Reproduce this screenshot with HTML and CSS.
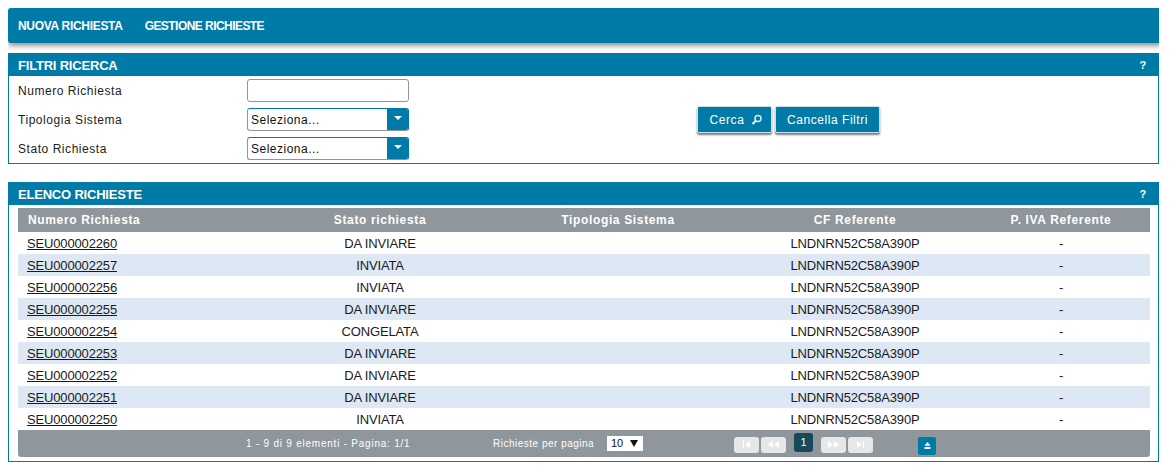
FILE: index.html
```html
<!DOCTYPE html>
<html>
<head>
    <meta charset="utf-8">
    <title>Elenco Richieste</title>
    <link rel="stylesheet" href="styles.css">
</head>
<body>
<div class="topbar">
    <a href="#" class="topbar-link">NUOVA RICHIESTA</a>
    <a href="#" class="topbar-link topbar-link-tight">GESTIONE RICHIESTE</a>
</div>

<div class="panel panel-filters">
    <div class="panel-title"><span>FILTRI RICERCA</span><span class="help">?</span></div>
    <div class="filters">
        <div class="filter-grid">
            <label class="filter-label">Numero Richiesta</label>
            <input type="text" class="field">
            <label class="filter-label">Tipologia Sistema</label>
            <div class="field combo"><span class="combo-text">Seleziona...</span><span class="combo-btn"><i class="combo-arrow"></i></span></div>
            <label class="filter-label">Stato Richiesta</label>
            <div class="field combo"><span class="combo-text">Seleziona...</span><span class="combo-btn"><i class="combo-arrow"></i></span></div>
        </div>
        <div class="filter-actions">
            <button class="btn btn-search">Cerca
                <svg width="12" height="12" viewBox="0 0 12 12"><circle cx="7" cy="4.6" r="3" fill="none" stroke="#d8eaf2" stroke-width="1.5"/><path d="M4.8 6.8L1.6 10" stroke="#fff" stroke-width="2"/></svg>
            </button>
            <button class="btn btn-clear">Cancella Filtri</button>
        </div>
    </div>
</div>

<div class="panel panel-list">
    <div class="panel-title"><span>ELENCO RICHIESTE</span><span class="help">?</span></div>
    <div class="list-body">
        <table class="grid">
            <colgroup>
                <col class="col-num"><col class="col-stato"><col class="col-tipo"><col class="col-cf"><col class="col-iva">
            </colgroup>
            <thead>
                <tr><th class="first">Numero Richiesta</th><th>Stato richiesta</th><th>Tipologia Sistema</th><th>CF Referente</th><th>P. IVA Referente</th></tr>
            </thead>
            <tbody>
                <tr><td class="first"><a href="#">SEU000002260</a></td><td>DA INVIARE</td><td></td><td>LNDNRN52C58A390P</td><td>-</td></tr>
                <tr class="alt"><td class="first"><a href="#">SEU000002257</a></td><td>INVIATA</td><td></td><td>LNDNRN52C58A390P</td><td>-</td></tr>
                <tr><td class="first"><a href="#">SEU000002256</a></td><td>INVIATA</td><td></td><td>LNDNRN52C58A390P</td><td>-</td></tr>
                <tr class="alt"><td class="first"><a href="#">SEU000002255</a></td><td>DA INVIARE</td><td></td><td>LNDNRN52C58A390P</td><td>-</td></tr>
                <tr><td class="first"><a href="#">SEU000002254</a></td><td>CONGELATA</td><td></td><td>LNDNRN52C58A390P</td><td>-</td></tr>
                <tr class="alt"><td class="first"><a href="#">SEU000002253</a></td><td>DA INVIARE</td><td></td><td>LNDNRN52C58A390P</td><td>-</td></tr>
                <tr><td class="first"><a href="#">SEU000002252</a></td><td>DA INVIARE</td><td></td><td>LNDNRN52C58A390P</td><td>-</td></tr>
                <tr class="alt"><td class="first"><a href="#">SEU000002251</a></td><td>DA INVIARE</td><td></td><td>LNDNRN52C58A390P</td><td>-</td></tr>
                <tr><td class="first"><a href="#">SEU000002250</a></td><td>INVIATA</td><td></td><td>LNDNRN52C58A390P</td><td>-</td></tr>
            </tbody>
        </table>
        <div class="pager">
            <span class="pager-info">1 - 9 di 9 elementi - Pagina: 1/1</span>
            <span class="pager-size-label">Richieste per pagina</span>
            <span class="pager-size">10<i class="size-arrow"></i></span>
            <div class="pager-nav">
                <span class="page-btn"><svg width="11" height="7" viewBox="0 0 11 7"><path d="M2 0h1v7H2zM9 0v7L4 3.5z" fill="#fff"/></svg></span>
                <span class="page-btn"><svg width="13" height="7" viewBox="0 0 13 7"><path d="M6 0v7L1 3.5zM12 0v7L7 3.5z" fill="#fff"/></svg></span>
                <span class="page-num">1</span>
                <span class="page-btn"><svg width="13" height="7" viewBox="0 0 13 7"><path d="M1 0v7l5-3.500zM7 0v7l5-3.500z" fill="#fff"/></svg></span>
                <span class="page-btn"><svg width="11" height="7" viewBox="0 0 11 7"><path d="M2 0v7l5-3.500zM8 0h1v7H8z" fill="#fff"/></svg></span>
            </div>
            <span class="eject"><svg width="7" height="7" viewBox="0 0 7 7"><path d="M3.500 0l3 3.800h-6zM0.500 5h6v2h-6z" fill="#fff"/></svg></span>
        </div>
    </div>
</div>
</body>
</html>
```

FILE: styles.css
```css
*{box-sizing:border-box;}
body{margin:8px 11px 0 8px;background:#fff;color:#111;font-family:"Liberation Sans",Arial,sans-serif;font-size:13px;}

.topbar{height:35px;margin-right:-3px;padding:0 10px;display:flex;align-items:center;gap:22px;background:#007aa6;border-radius:3px;box-shadow:0 3px 5px rgba(60,70,80,.55);}
.topbar-link{color:#fff;font-size:12px;font-weight:bold;text-decoration:none;letter-spacing:-.3px;}
.topbar-link-tight{letter-spacing:-.55px;}

.panel{border:solid #007aa6;border-width:0 1px 1px 1px;}
.panel-filters{margin-top:10px;height:111px;}
.panel-list{margin-top:18px;height:280px;}
.panel-title{height:23px;margin:0 -1px;padding:1px 13px 0 10px;display:flex;justify-content:space-between;align-items:center;background:#007aa6;color:#fff;font-size:13px;font-weight:bold;letter-spacing:-.2px;}
.help{font-size:11px;font-weight:bold;}

.filters{display:flex;}
.filter-grid{width:400px;padding:3px 0 0 9px;display:grid;grid-template-columns:229px 162px;grid-auto-rows:23px;row-gap:6px;align-items:center;}
.filter-label{font-size:12px;letter-spacing:.55px;color:#222;}
.field{width:162px;height:23px;border:1px solid #8e969c;border-radius:3px;background:#fff;padding:0;}
.combo{display:flex;border-color:#007aa6 #007aa6 #8e969c #8e969c;overflow:hidden;}
.combo-text{flex:1;padding:4px 0 0 3px;font-size:12px;letter-spacing:.5px;color:#111;}
.combo-btn{width:21px;background:#007aa6;display:flex;justify-content:center;padding-top:7px;}
.combo-arrow{width:0;height:0;border:4px solid transparent;border-top:4px solid #fff;}

.filter-actions{margin:30px 0 0 288px;display:flex;gap:3px;align-items:flex-start;}
.btn{height:27px;border:1px solid #cfe0e8;border-radius:2px;background:#007aa6;color:#fff;font-family:inherit;font-size:12px;letter-spacing:.55px;box-shadow:0 2px 2px rgba(60,70,90,.7);padding:0;display:flex;align-items:center;justify-content:center;}
.btn-search{width:75px;gap:7px;padding-left:4px;}
.btn-clear{width:105px;}

.list-body{padding:3px 9px 0 9px;}
.grid{width:1132px;border-collapse:collapse;table-layout:fixed;}
.col-num{width:244px;}
.col-stato{width:236px;}
.col-tipo{width:240px;}
.col-cf{width:234px;}
.col-iva{width:178px;}
.grid th{height:24px;padding:0;background:#8f969c;color:#fff;font-size:12px;font-weight:bold;letter-spacing:.65px;text-align:center;}
.grid td{height:22px;padding:0;font-size:13px;letter-spacing:-.15px;text-align:center;color:#1a1a1a;}
.grid th.first{text-align:left;padding-left:10px;}
.grid td.first{text-align:left;padding-left:9px;}
.grid td a{color:#1a1a1a;}
.grid tr.alt td{background:#dde8f4;}

.pager{height:27px;width:1132px;background:#8f969c;border-radius:0 0 3px 3px;display:flex;align-items:center;color:#fff;font-size:10px;letter-spacing:.5px;}
.pager-info{margin-left:228px;width:247px;letter-spacing:.77px;}
.pager-size-label{width:114px;}
.pager-size{width:36px;height:15px;background:#fff;color:#111;font-size:11px;letter-spacing:0;padding:1px 0 0 4px;display:flex;gap:7px;}
.size-arrow{width:0;height:0;margin-top:3px;border:4px solid transparent;border-top:7px solid #111;border-bottom:0;}
.pager-nav{margin-left:91px;display:flex;gap:2px;align-items:center;}
.page-btn{width:25px;height:16px;background:#e6e7e8;border-radius:3px;display:flex;align-items:center;justify-content:center;margin-top:2px;}
.page-num{width:19px;height:19px;margin:-3px 6px 0 6px;background:#16495c;border-radius:3px;font-size:11px;display:flex;align-items:center;justify-content:center;letter-spacing:0;}
.eject{width:18px;height:18px;margin:4px 0 0 45px;background:#007aa6;border-radius:2px;display:flex;align-items:center;justify-content:center;}
```
